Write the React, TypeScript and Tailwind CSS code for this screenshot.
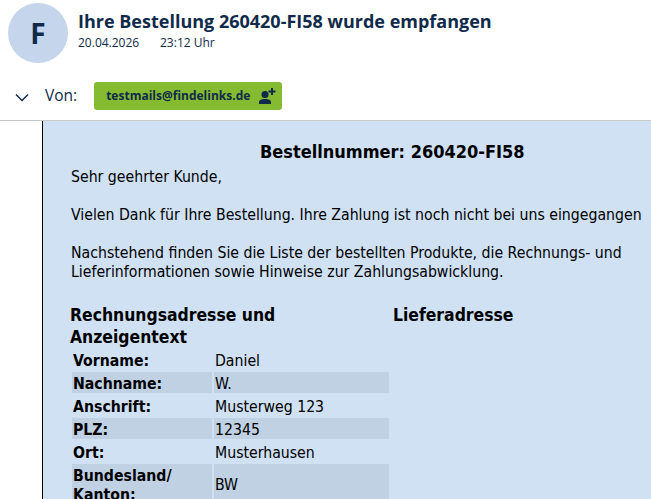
const rows = [
  { label: "Vorname:", value: "Daniel" },
  { label: "Nachname:", value: "W.", shaded: true },
  { label: "Anschrift:", value: "Musterweg 123" },
  { label: "PLZ:", value: "12345", shaded: true },
  { label: "Ort:", value: "Musterhausen" },
];

const bodyFont = "[font-family:'DejaVu_Sans',sans-serif] [font-stretch:condensed]";

const Row = ({ label, value, shaded }: { label: string; value: string; shaded?: boolean }) => (
  <div className="flex h-[21px] gap-[2px] mb-[2px]">
    <div className={`w-[140px] pl-[1px] font-bold leading-[23px] ${shaded ? "bg-[#bfd1e3]" : ""}`}>{label}</div>
    <div className={`w-[175px] pl-[1px] leading-[23px] ${shaded ? "bg-[#bfd1e3]" : ""}`}>{value}</div>
  </div>
);

export default function App() {
  return (
    <div className="h-[499px] w-[651px] overflow-hidden bg-white font-['Open_Sans',sans-serif] text-[#0f2a4a]">
      <div className="flex h-[82px] pl-2 pt-[3px]">
        <div className="flex h-[60px] w-[60px] items-center justify-center rounded-full bg-[#c5d5eb] text-[28px] font-bold">F</div>
        <div className="ml-[10px] pt-[6px]">
          <h1 className="text-[18px] font-bold leading-[24px]">Ihre Bestellung 260420-FI58 wurde empfangen</h1>
          <div className="mt-[2px] flex text-[12px] leading-[16px]">
            <span className="w-[82px]">20.04.2026</span>
            <span>23:12 Uhr</span>
          </div>
        </div>
      </div>
      <div className="flex h-[39px] items-start border-b border-[#c9c9c9] pl-[15px]">
        <svg width="14" height="9" viewBox="0 0 14 9" className="mt-[11px]" fill="none" stroke="#0f2a4a" strokeWidth="1.5">
          <path d="M1 1.5l6 6 6-6" />
        </svg>
        <span className="ml-[16px] text-[15.5px] leading-[26px]">Von:</span>
        <div className="ml-[17px] flex h-[28px] w-[188px] items-center rounded-[3px] bg-[#84bb31] pl-[12px]">
          <span className="text-[12px] font-bold">testmails@findelinks.de</span>
          <svg width="18" height="18" viewBox="0 0 18 18" className="ml-[8px]" fill="#0f2a4a">
            <circle cx="7" cy="7.5" r="3.5" />
            <path d="M1 17v-2c0-2 2.5-3 6-3s6 1 6 3v2z" />
            <path d="M13 1h2v2.5h2.5v2H15V8h-2V5.5h-2.5v-2H13z" />
          </svg>
        </div>
      </div>
      <div className={`ml-[42px] h-[378px] overflow-hidden border-l border-black bg-[#cfe1f3] pl-[28px] text-[15.7px] text-black ${bodyFont}`}>
        <h2 className="pt-[20px] pl-[189px] text-[18px] font-bold leading-[21px]">Bestellnummer: 260420-FI58</h2>
        <p className="leading-[19px] mt-[5px]">Sehr geehrter Kunde,</p>
        <p className="mt-[19px] leading-[19px] whitespace-nowrap">Vielen Dank für Ihre Bestellung. Ihre Zahlung ist noch nicht bei uns eingegangen</p>
        <p className="mt-[19px] w-[575px] leading-[19px]">Nachstehend finden Sie die Liste der bestellten Produkte, die Rechnungs- und Lieferinformationen sowie Hinweise zur Zahlungsabwicklung.</p>
        <div className="mt-[23px] -ml-[1px] flex">
          <div className="w-[323px]">
            <h3 className="w-[260px] text-[17.4px] font-bold leading-[22px]">Rechnungsadresse und Anzeigentext</h3>
            <div className="ml-[2px] mt-[1px]">
              {rows.map((r) => (
                <Row key={r.label} {...r} />
              ))}
              <div className="flex h-[42px] gap-[2px]">
                <div className="w-[140px] bg-[#bfd1e3] pl-[1px] pt-[2px] font-bold leading-[19px]">Bundesland/ Kanton:</div>
                <div className="flex w-[175px] items-center bg-[#bfd1e3] pl-[1px]">BW</div>
              </div>
            </div>
          </div>
          <h3 className="text-[17.4px] font-bold leading-[22px]">Lieferadresse</h3>
        </div>
      </div>
    </div>
  );
}
